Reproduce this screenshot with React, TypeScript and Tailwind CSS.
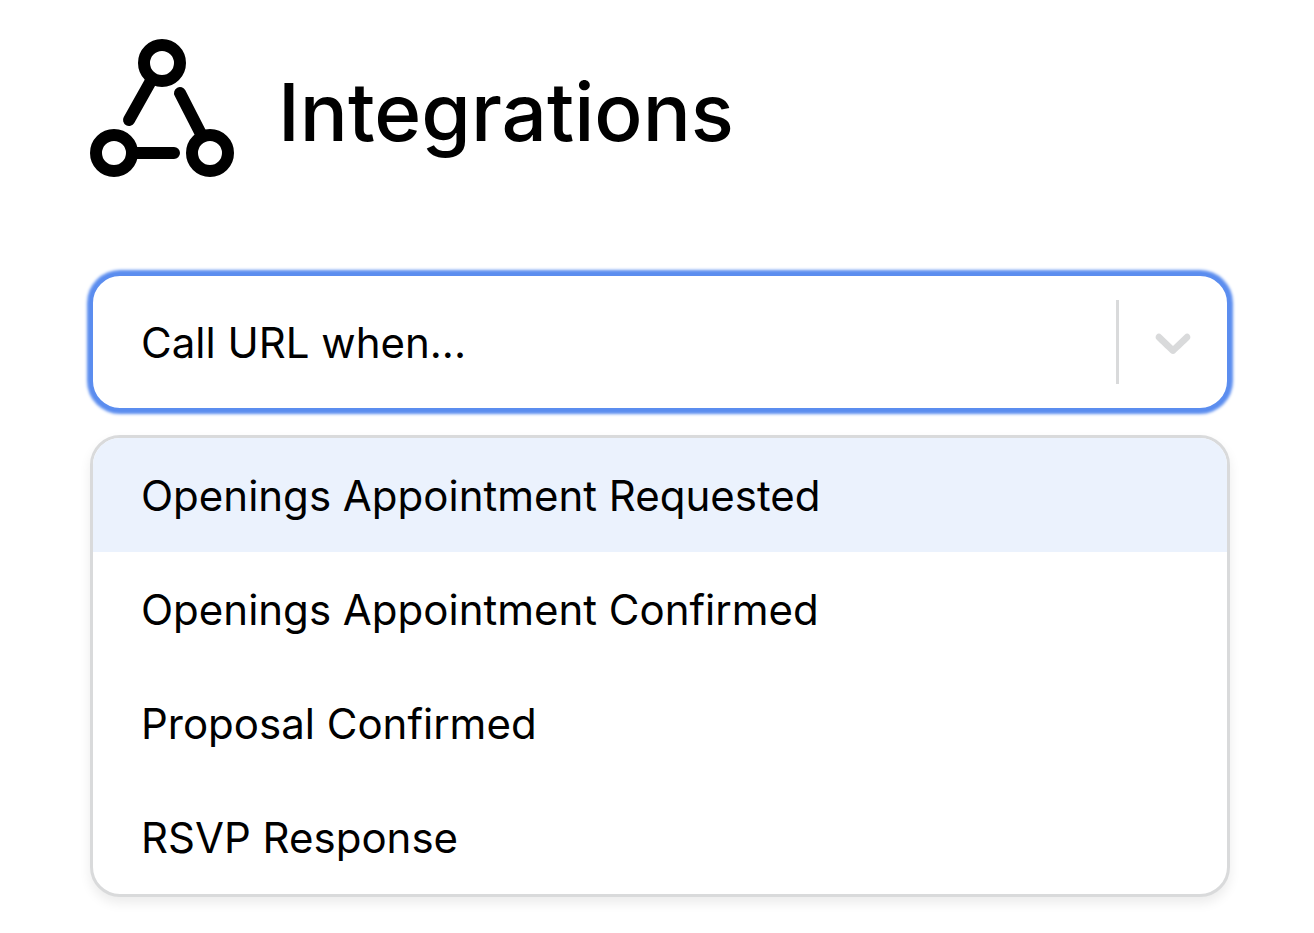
import { useState } from "react";
import clsx from "clsx";

const triggers = [
    "Openings Appointment Requested",
    "Openings Appointment Confirmed",
    "Proposal Confirmed",
    "RSVP Response",
];

function IntegrationsIcon() {
    return (
        <svg
            className="size-36 shrink-0"
            viewBox="0 0 144 144"
            fill="none"
            stroke="currentColor"
            strokeWidth="12"
            strokeLinecap="round"
            aria-hidden="true"
        >
            <circle cx="72" cy="27" r="18" />
            <circle cx="24" cy="117" r="18" />
            <circle cx="120" cy="117" r="18" />
            <path d="M62 43L39 84M90 57L112 100M44 117H84" />
        </svg>
    );
}

function ChevronIcon() {
    return (
        <svg className="size-[60px]" viewBox="0 0 20 20" fill="currentColor" aria-hidden="true">
            <path d="M4.516 7.548c0.436-0.446 1.043-0.481 1.576 0l3.908 3.747 3.908-3.747c0.533-0.481 1.141-0.446 1.574 0 0.436 0.445 0.408 1.197 0 1.615-0.406 0.418-4.695 4.502-4.695 4.502-0.217 0.223-0.502 0.335-0.787 0.335s-0.57-0.112-0.789-0.335c0 0-4.287-4.084-4.695-4.502s-0.436-1.17 0-1.615z" />
        </svg>
    );
}

export default function App() {
    const [open, setOpen] = useState(true);
    const [active, setActive] = useState(0);
    const [selected, setSelected] = useState("");

    const choose = (trigger: string) => {
        setSelected(trigger);
        setOpen(false);
    };

    return (
        <main className="bg-white pt-9 pr-[84px] pb-9 pl-[90px] font-['Inter',sans-serif] text-black">
            <header className="flex items-end gap-11">
                <IntegrationsIcon />
                <h1 className="text-[80px] leading-[136px] font-medium">Integrations</h1>
            </header>

            <div
                className={clsx(
                    "mt-[93px] flex h-[138px] items-center rounded-[30px] border-3 bg-white text-[#d9dadb]",
                    open ? "border-[#5b8def] shadow-[0_0_3px_3px_#5b8def]" : "border-[#d9dadb]"
                )}
            >
                <select
                    aria-label="Call URL when"
                    value={selected}
                    onChange={(e) => choose(e.target.value)}
                    onMouseDown={(e) => {
                        // the list below replaces the native popup
                        e.preventDefault();
                        setOpen(!open);
                    }}
                    className="h-full min-w-0 flex-1 appearance-none bg-transparent pl-12 text-[42px] text-black outline-none"
                >
                    <option value="">Call URL when...</option>
                    {triggers.map((trigger) => (
                        <option key={trigger} value={trigger}>{trigger}</option>
                    ))}
                </select>
                <span className="h-[84px] w-[3px] bg-[#d9dadb]" />
                <button type="button" aria-label="Toggle list" className="px-6" onClick={() => setOpen(!open)}>
                    <ChevronIcon />
                </button>
            </div>

            {open && (
                <ul className="mt-6 overflow-hidden rounded-[30px] border-3 border-[#d9dadb] bg-white shadow-[0_6px_12px_rgba(0,0,0,0.08)]">
                    {triggers.map((trigger, i) => (
                        <li key={trigger}>
                            <button
                                type="button"
                                onMouseEnter={() => setActive(i)}
                                onClick={() => choose(trigger)}
                                className={clsx(
                                    "h-[114px] w-full px-12 text-left text-[42px]",
                                    i === active && "bg-[#ebf2fd]"
                                )}
                            >
                                {trigger}
                            </button>
                        </li>
                    ))}
                </ul>
            )}
        </main>
    );
}
